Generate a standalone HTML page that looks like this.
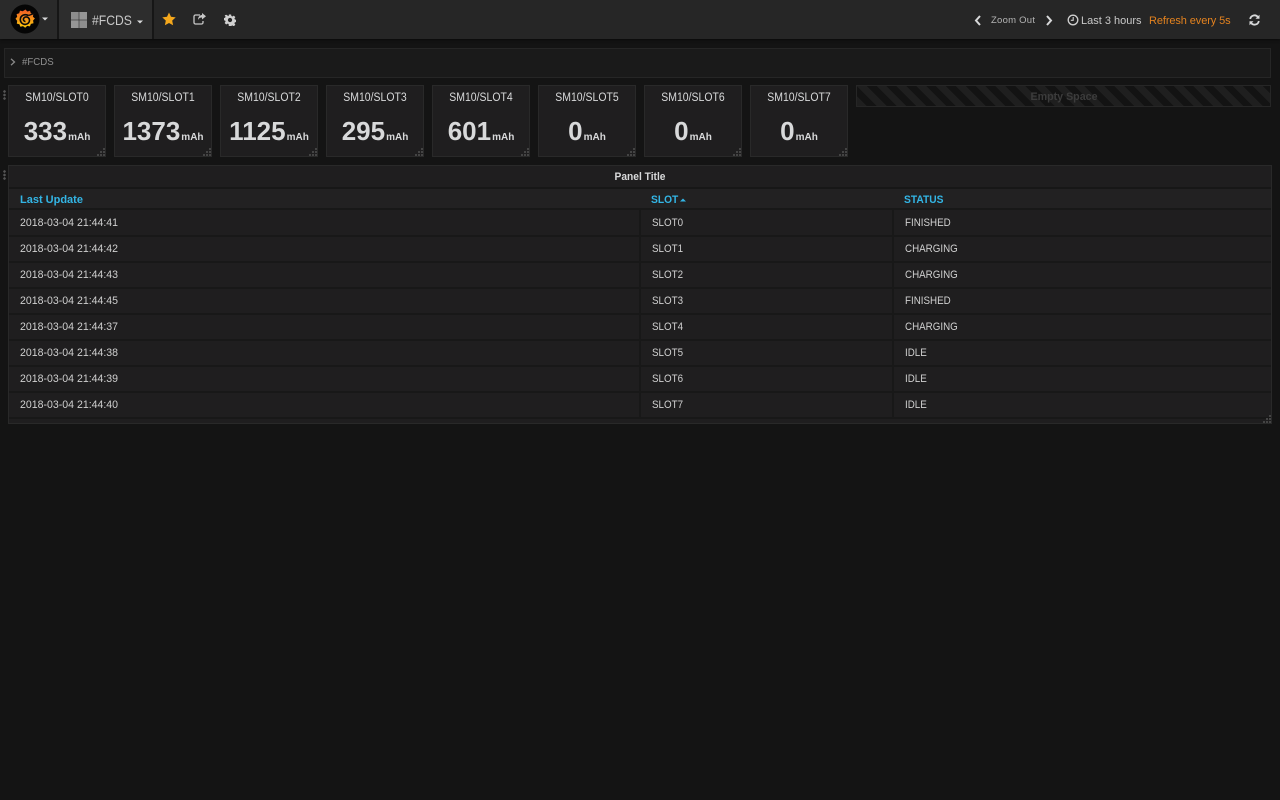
<!DOCTYPE html>
<html>
<head>
<meta charset="utf-8">
<title>#FCDS</title>
<style>
html,body{margin:0;padding:0;width:1280px;height:800px;overflow:hidden;background:#141414;font-family:"Liberation Sans",sans-serif;color:#d8d9da}
div,span,svg{position:absolute;box-sizing:border-box;white-space:nowrap}
span.u{position:static}
.nav{left:0;top:0;width:1280px;height:39px;background:#262626;box-shadow:0 1px 3px #0a0a0a}
.seg{top:0;height:39px;background:#2a2a2a;border-right:2px solid #161616}
.stat{top:85px;width:98px;height:72px;background:#1f1e1f;border:1px solid #292929}
.st{left:0;width:96px;top:6px;text-align:center;font-size:11.5px;line-height:12px;color:#d8d9da;transform:scaleX(.91)}
.sv{left:0;width:96px;top:29px;text-align:center;font-size:26px;line-height:32px;font-weight:bold;color:#d8d9da}
.sv .u{font-size:10px;font-weight:bold;margin-left:1px}
.h{top:194px;font-size:11px;line-height:13px;font-weight:bold;color:#33b5e5;transform-origin:0 50%}
.c{font-size:11px;line-height:13px;color:#d0d0d0;transform-origin:0 50%;transform:scaleX(.89)}
.d{font-size:11px;line-height:13px;color:#d0d0d0;transform-origin:0 50%;transform:scaleX(.96)}
.l{left:9px;width:1262px;height:2px;background:#181818}
.v{top:209px;width:2px;height:208px;background:#181818}
.dots{left:3px;width:3px;height:10px;background:radial-gradient(circle at 1.5px 1.5px,#555 1.2px,transparent 1.4px) 0 0/3px 3.5px}
</style>
</head>
<body>
<div class="nav"></div>
<div class="seg" style="left:0;width:59px"></div>
<div class="seg" style="left:59px;width:95px;background:#2d2d2d"></div>

<svg style="left:10px;top:4px" width="30" height="30" viewBox="0 0 30 30">
<defs><linearGradient id="g" x1="0" y1="1" x2="0" y2="0"><stop offset="0" stop-color="#fbca0a"/><stop offset="1" stop-color="#f05a28"/></linearGradient></defs>
<circle cx="15" cy="15" r="14.500" fill="#050505"/>
<path d="M15.500 5.500l1.800 2 2.700-.8.800 2.600 2.600.7-.5 2.700 2 1.800-1.800 2 .4 2.700-2.600.7-1 2.500-2.700-.5-2 1.900-2.200-1.700-2.600.7-1-2.500-2.600-.7.4-2.700-1.700-2.100 1.700-2.100-.6-2.600 2.600-.9.800-2.600 2.700.7z" fill="url(#g)"/>
<path d="M18.500 11.500c-3.500-2-8-.2-8.200 3.900-.1 3 2.300 5.100 5 5 2.500-.1 4.300-2 4.200-4.200-.1-2-1.700-3.400-3.500-3.300-1.600.1-2.700 1.300-2.600 2.700.1 1.100 1 1.900 2.100 1.800" fill="none" stroke="#0a0a0a" stroke-width="1.600"/>
<path d="M18.500 11.500l7-2.500" stroke="#0a0a0a" stroke-width="1.400" fill="none"/>
</svg>
<svg style="left:42px;top:17px" width="6" height="4" viewBox="0 0 6 4"><path d="M0 .5h6L3 3.500z" fill="#d8d9da"/></svg>

<svg style="left:71px;top:12px" width="16" height="16" viewBox="0 0 16 16">
<rect x="0" y="0" width="7.700" height="7.700" fill="#8e8e8e"/><rect x="8.300" y="0" width="7.700" height="7.700" fill="#969696"/>
<rect x="0" y="8.300" width="7.700" height="7.700" fill="#969696"/><rect x="8.300" y="8.300" width="7.700" height="7.700" fill="#8e8e8e"/>
</svg>
<div style="left:92px;top:12px;font-size:14px;line-height:16px;color:#c8c8c8;transform-origin:0 50%;transform:scaleX(.87)">#FCDS</div>
<svg style="left:137px;top:20px" width="6" height="4" viewBox="0 0 6 4"><path d="M0 .5h6L3 3.500z" fill="#d8d9da"/></svg>

<svg style="left:162px;top:12px" width="14" height="14" viewBox="0 0 14 14"><path d="M7 .5l2 4.300 4.700.6-3.500 3.200.9 4.700L7 11l-4.100 2.300.9-4.700L.3 5.400 5 4.800z" fill="#f5a81c"/></svg>
<svg style="left:193px;top:12px" width="14" height="14" viewBox="0 0 14 14"><path d="M7 3H2.500A1.500 1.500 0 0 0 1 4.500v6A1.500 1.500 0 0 0 2.500 12h6A1.500 1.500 0 0 0 10 10.500V9" fill="none" stroke="#c8c8c8" stroke-width="1.300"/><path d="M9 1l4 3.200-4 3.300V5.500c-2 0-3.300.7-4 2.500 0-3 1.500-4.800 4-5z" fill="#c8c8c8"/></svg>
<svg style="left:224px;top:14px" width="12" height="12" viewBox="0 0 13 13"><path d="M5.300.5h2.400l.3 1.700 1.100.5 1.500-1 1.700 1.700-1 1.400.5 1.200 1.700.3v2.400l-1.700.3-.5 1.100 1 1.500-1.700 1.700-1.500-1-1.100.5-.3 1.700H5.300L5 10.900l-1.100-.5-1.500 1L.7 9.700l1-1.500-.5-1.100-1.700-.3V4.400l1.700-.3.500-1.200-1-1.400L2.400.8l1.500 1L5 2.300z" fill="#d0d0d0"/><circle cx="6.500" cy="6.500" r="2.300" fill="#262626"/></svg>

<svg style="left:974px;top:15px" width="8" height="11" viewBox="0 0 8 11"><path d="M6 1L2 5.500 6 10" fill="none" stroke="#d8d9da" stroke-width="2"/></svg>
<div style="left:991px;top:15px;font-size:9.500px;line-height:12px;color:#b4b4b4;letter-spacing:.25px">Zoom Out</div>
<svg style="left:1045px;top:15px" width="8" height="11" viewBox="0 0 8 11"><path d="M2 1l4 4.500L2 10" fill="none" stroke="#d8d9da" stroke-width="2"/></svg>
<svg style="left:1067px;top:14px" width="12" height="12" viewBox="0 0 12 12"><circle cx="6" cy="6" r="4.800" fill="none" stroke="#d0d0d0" stroke-width="1.300"/><path d="M6.200 3v3.300H3.800" fill="none" stroke="#d0d0d0" stroke-width="1.100"/></svg>
<div style="left:1081px;top:14px;font-size:11px;line-height:14px;color:#c8c8c8">Last 3 hours</div>
<div style="left:1149px;top:14px;font-size:11px;line-height:14px;color:#e3821f;letter-spacing:-.1px">Refresh every 5s</div>
<svg style="left:1249px;top:14px" width="11" height="12" viewBox="0 0 11 12"><path d="M1.200 5A4.300 4.300 0 0 1 9 3.200M9.800 7A4.300 4.300 0 0 1 2 8.800" fill="none" stroke="#d8d9da" stroke-width="1.800"/><path d="M10.500.8v4H6.500zM.5 11.200v-4h4z" fill="#d8d9da"/></svg>

<div style="left:4px;top:48px;width:1267px;height:30px;background:#1a1a1a;border:1px solid #262626"></div>
<svg style="left:10px;top:58px" width="6" height="8" viewBox="0 0 6 8"><path d="M1 .8L4.500 4 1 7.200" fill="none" stroke="#8a8a8a" stroke-width="1.300"/></svg>
<div style="left:22px;top:55px;font-size:10.500px;line-height:14px;color:#8e8e8e;transform-origin:0 50%;transform:scaleX(.92)">#FCDS</div>

<div class="dots" style="top:90px"></div>
<div class="dots" style="top:170px"></div>

<div class="stat" style="left:8px"><div class="st">SM10/SLOT0</div><div class="sv">333<span class="u">mAh</span></div></div>
<div class="stat" style="left:114px"><div class="st">SM10/SLOT1</div><div class="sv">1373<span class="u">mAh</span></div></div>
<div class="stat" style="left:220px"><div class="st">SM10/SLOT2</div><div class="sv">1125<span class="u">mAh</span></div></div>
<div class="stat" style="left:326px"><div class="st">SM10/SLOT3</div><div class="sv">295<span class="u">mAh</span></div></div>
<div class="stat" style="left:432px"><div class="st">SM10/SLOT4</div><div class="sv">601<span class="u">mAh</span></div></div>
<div class="stat" style="left:538px"><div class="st">SM10/SLOT5</div><div class="sv">0<span class="u">mAh</span></div></div>
<div class="stat" style="left:644px"><div class="st">SM10/SLOT6</div><div class="sv">0<span class="u">mAh</span></div></div>
<div class="stat" style="left:750px"><div class="st">SM10/SLOT7</div><div class="sv">0<span class="u">mAh</span></div></div>

<svg style="left:97px;top:148px" width="8" height="8" viewBox="0 0 8 8"><path d="M6 0h2v2H6zM3 3h2v2H3zM6 3h2v2H6zM0 6h2v2H0zM3 6h2v2H3zM6 6h2v2H6z" fill="#444"/></svg>
<svg style="left:203px;top:148px" width="8" height="8" viewBox="0 0 8 8"><path d="M6 0h2v2H6zM3 3h2v2H3zM6 3h2v2H6zM0 6h2v2H0zM3 6h2v2H3zM6 6h2v2H6z" fill="#444"/></svg>
<svg style="left:309px;top:148px" width="8" height="8" viewBox="0 0 8 8"><path d="M6 0h2v2H6zM3 3h2v2H3zM6 3h2v2H6zM0 6h2v2H0zM3 6h2v2H3zM6 6h2v2H6z" fill="#444"/></svg>
<svg style="left:415px;top:148px" width="8" height="8" viewBox="0 0 8 8"><path d="M6 0h2v2H6zM3 3h2v2H3zM6 3h2v2H6zM0 6h2v2H0zM3 6h2v2H3zM6 6h2v2H6z" fill="#444"/></svg>
<svg style="left:521px;top:148px" width="8" height="8" viewBox="0 0 8 8"><path d="M6 0h2v2H6zM3 3h2v2H3zM6 3h2v2H6zM0 6h2v2H0zM3 6h2v2H3zM6 6h2v2H6z" fill="#444"/></svg>
<svg style="left:627px;top:148px" width="8" height="8" viewBox="0 0 8 8"><path d="M6 0h2v2H6zM3 3h2v2H3zM6 3h2v2H6zM0 6h2v2H0zM3 6h2v2H3zM6 6h2v2H6z" fill="#444"/></svg>
<svg style="left:733px;top:148px" width="8" height="8" viewBox="0 0 8 8"><path d="M6 0h2v2H6zM3 3h2v2H3zM6 3h2v2H6zM0 6h2v2H0zM3 6h2v2H3zM6 6h2v2H6z" fill="#444"/></svg>
<svg style="left:839px;top:148px" width="8" height="8" viewBox="0 0 8 8"><path d="M6 0h2v2H6zM3 3h2v2H3zM6 3h2v2H6zM0 6h2v2H0zM3 6h2v2H3zM6 6h2v2H6z" fill="#444"/></svg>

<div style="left:856px;top:85px;width:415px;height:22px;border:1px solid #262626;background:repeating-linear-gradient(45deg,#1f1f1f 0,#1f1f1f 7px,#131313 7px,#131313 14px)"></div>
<div style="left:856px;top:91px;width:416px;text-align:center;font-size:11px;line-height:13px;font-weight:bold;color:#3c3c3c;transform:scaleX(.97)">Empty Space</div>

<div style="left:8px;top:165px;width:1264px;height:259px;background:#1f1e1f;border:1px solid #292929"></div>
<div style="left:9px;top:187px;width:1262px;height:2px;background:#171717"></div>
<div style="left:9px;top:189px;width:1262px;height:19px;background:#222122"></div>
<div style="left:0;top:171px;width:1280px;text-align:center;font-size:11px;line-height:13px;font-weight:bold;color:#d8d9da;transform:scaleX(.93)">Panel Title</div>

<div class="h" style="left:20px;transform:scaleX(1)">Last Update</div>
<div class="h" style="left:651px;transform:scaleX(.93)">SLOT</div>
<svg style="left:680px;top:198px" width="6" height="4" viewBox="0 0 6 4"><path d="M0 3.500h6L3 .5z" fill="#33b5e5"/></svg>
<div class="h" style="left:904px;transform:scaleX(.93)">STATUS</div>

<div class="l" style="top:208px"></div>
<div class="l" style="top:235px"></div>
<div class="l" style="top:261px"></div>
<div class="l" style="top:287px"></div>
<div class="l" style="top:313px"></div>
<div class="l" style="top:339px"></div>
<div class="l" style="top:365px"></div>
<div class="l" style="top:391px"></div>
<div class="l" style="top:417px"></div>
<div class="v" style="left:639px"></div>
<div class="v" style="left:892px"></div>

<div class="d" style="left:20px;top:217px">2018-03-04 21:44:41</div><div class="c" style="left:652px;top:217px">SLOT0</div><div class="c" style="left:905px;top:217px">FINISHED</div>
<div class="d" style="left:20px;top:243px">2018-03-04 21:44:42</div><div class="c" style="left:652px;top:243px">SLOT1</div><div class="c" style="left:905px;top:243px">CHARGING</div>
<div class="d" style="left:20px;top:269px">2018-03-04 21:44:43</div><div class="c" style="left:652px;top:269px">SLOT2</div><div class="c" style="left:905px;top:269px">CHARGING</div>
<div class="d" style="left:20px;top:295px">2018-03-04 21:44:45</div><div class="c" style="left:652px;top:295px">SLOT3</div><div class="c" style="left:905px;top:295px">FINISHED</div>
<div class="d" style="left:20px;top:321px">2018-03-04 21:44:37</div><div class="c" style="left:652px;top:321px">SLOT4</div><div class="c" style="left:905px;top:321px">CHARGING</div>
<div class="d" style="left:20px;top:347px">2018-03-04 21:44:38</div><div class="c" style="left:652px;top:347px">SLOT5</div><div class="c" style="left:905px;top:347px">IDLE</div>
<div class="d" style="left:20px;top:373px">2018-03-04 21:44:39</div><div class="c" style="left:652px;top:373px">SLOT6</div><div class="c" style="left:905px;top:373px">IDLE</div>
<div class="d" style="left:20px;top:399px">2018-03-04 21:44:40</div><div class="c" style="left:652px;top:399px">SLOT7</div><div class="c" style="left:905px;top:399px">IDLE</div>

<svg style="left:1263px;top:415px" width="8" height="8" viewBox="0 0 8 8"><path d="M6 0h2v2H6zM3 3h2v2H3zM6 3h2v2H6zM0 6h2v2H0zM3 6h2v2H3zM6 6h2v2H6z" fill="#444"/></svg>
</body>
</html>
